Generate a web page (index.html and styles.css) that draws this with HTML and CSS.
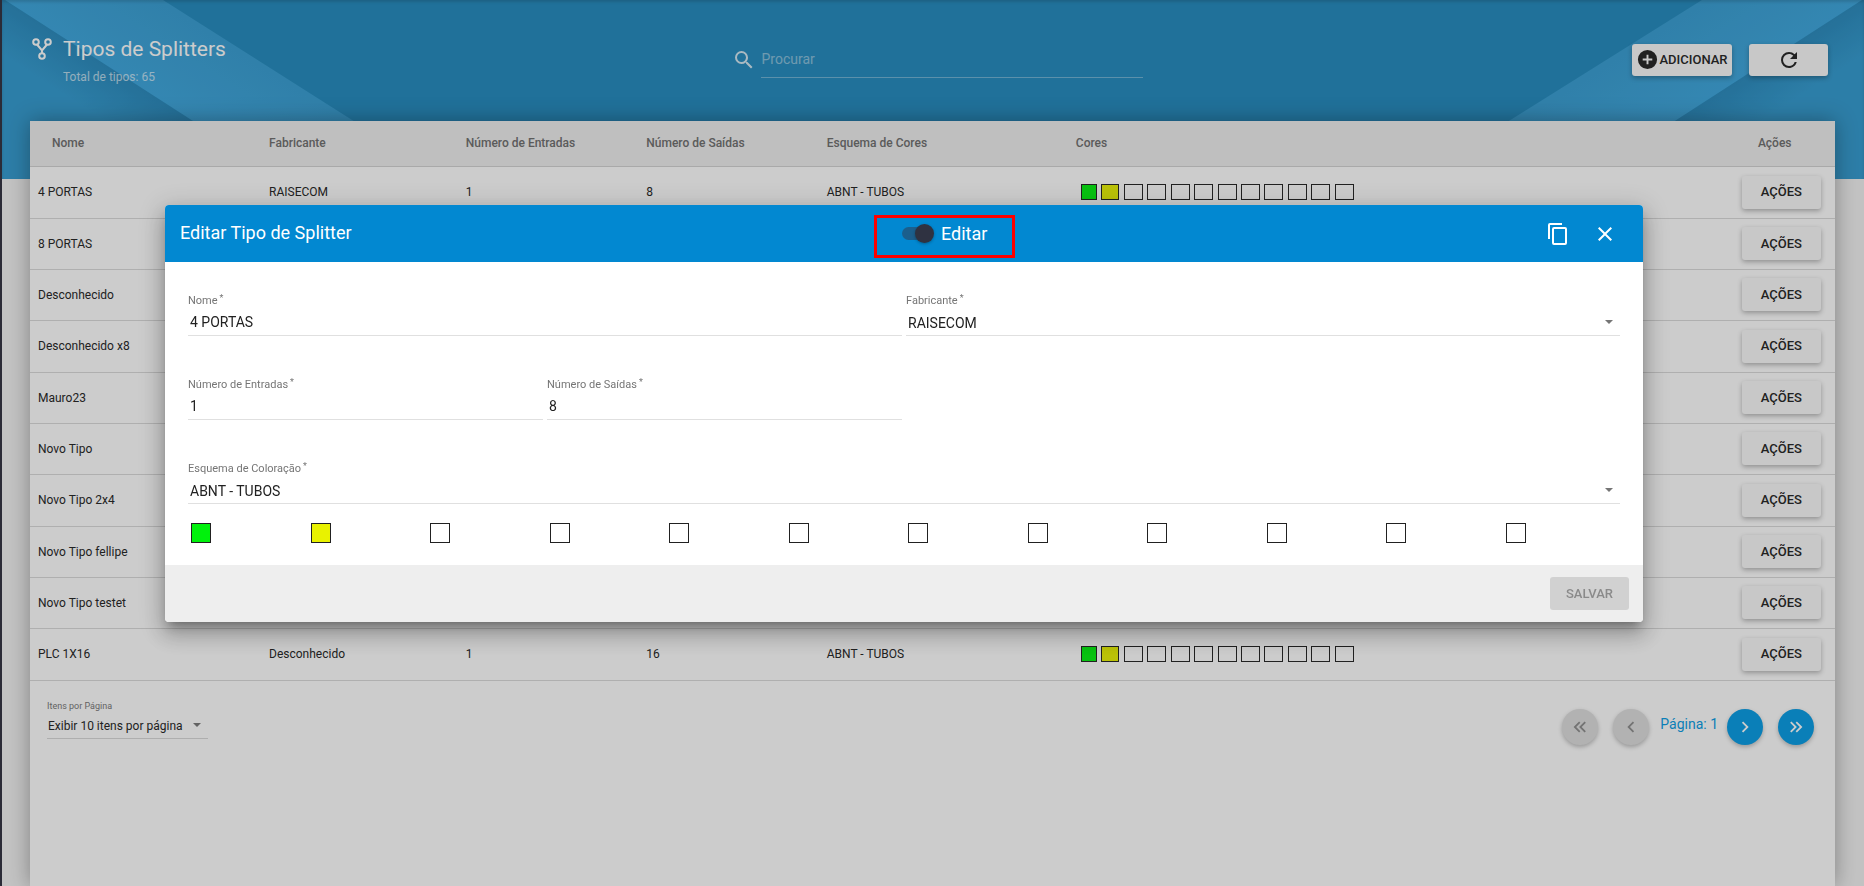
FILE: index.html
```html
<!DOCTYPE html>
<html lang="pt-BR">
<head>
<meta charset="utf-8">
<title>Tipos de Splitters</title>
<link rel="stylesheet" href="styles.css">
</head>
<body>
<div class="page">
  <div class="hero" aria-hidden="true">
    <svg class="hero-art" viewBox="0 0 460 179">
      <defs>
        <linearGradient id="foldLeft" gradientUnits="userSpaceOnUse" x1="98" y1="61" x2="72" y2="101">
          <stop offset="0" stop-color="#2688bc"/><stop offset="1" stop-color="#309ad0"/>
        </linearGradient>
        <linearGradient id="bandLeft" gradientUnits="userSpaceOnUse" x1="98" y1="61" x2="142" y2="-8">
          <stop offset="0" stop-color="#3aa5dd"/><stop offset="1" stop-color="#359dd3"/>
        </linearGradient>
      </defs>
      <path d="M0 0H3L281 179H0Z" fill="url(#foldLeft)"/>
      <path d="M3 0H161L443 179H281Z" fill="url(#bandLeft)"/>
    </svg>
    <svg class="hero-art" viewBox="0 0 460 179">
      <defs>
        <linearGradient id="foldRight" gradientUnits="userSpaceOnUse" x1="362" y1="61" x2="388" y2="101">
          <stop offset="0" stop-color="#2688bc"/><stop offset="1" stop-color="#309ad0"/>
        </linearGradient>
        <linearGradient id="bandRight" gradientUnits="userSpaceOnUse" x1="362" y1="61" x2="318" y2="-8">
          <stop offset="0" stop-color="#3aa5dd"/><stop offset="1" stop-color="#359dd3"/>
        </linearGradient>
      </defs>
      <path d="M460 0H458L181 179H460Z" fill="url(#foldRight)"/>
      <path d="M458 0H298L12 179H181Z" fill="url(#bandRight)"/>
    </svg>
  </div>

  <header class="toolbar">
    <div class="heading">
      <svg class="heading-icon" viewBox="0 0 20 22" fill="none" stroke="currentColor" stroke-width="2">
        <circle cx="4" cy="4" r="2.8"/><circle cx="16" cy="4" r="2.8"/><circle cx="10" cy="18" r="2.8"/>
        <path d="M5 6.5L10 12.5L15 6.5M10 12V15.500"/>
      </svg>
      <div>
        <h1 class="title">Tipos de Splitters</h1>
        <p class="subtitle">Total de tipos: 65</p>
      </div>
    </div>
    <div class="search">
      <svg class="icon search-icon" viewBox="0 0 24 24"><path d="M9.5 3A6.500 6.500 0 0 1 16 9.500c0 1.610-.59 3.090-1.560 4.230l.27.27h.79l5 5-1.500 1.500-5-5v-.79l-.27-.27A6.516 6.516 0 0 1 9.500 16 6.500 6.500 0 0 1 3 9.500 6.500 6.500 0 0 1 9.500 3m0 2C7 5 5 7 5 9.500S7 14 9.500 14 14 12 14 9.500 12 5 9.500 5Z"/></svg>
      <input class="search-input" type="text" placeholder="Procurar" aria-label="Procurar">
    </div>
    <div class="tools">
      <button class="btn btn-add" type="button">
        <svg class="icon" viewBox="0 0 24 24"><path d="M17 13h-4v4h-2v-4H7v-2h4V7h2v4h4m-5-9A10 10 0 0 0 2 12a10 10 0 0 0 10 10 10 10 0 0 0 10-10A10 10 0 0 0 12 2Z"/></svg>ADICIONAR
      </button>
      <button class="btn btn-refresh" type="button" aria-label="Atualizar">
        <svg class="icon" viewBox="0 0 24 24"><path d="M17.650 6.350A7.958 7.958 0 0 0 12 4a8 8 0 0 0-8 8 8 8 0 0 0 8 8c3.730 0 6.840-2.550 7.730-6h-2.080A5.990 5.990 0 0 1 12 18a6 6 0 0 1-6-6 6 6 0 0 1 6-6c1.660 0 3.140.69 4.220 1.780L13 11h7V4l-2.350 2.350Z"/></svg>
      </button>
    </div>
  </header>

  <main class="card">
    <table class="grid">
      <colgroup>
        <col class="c-name"><col class="c-maker"><col class="c-in"><col class="c-out"><col class="c-scheme"><col class="c-colors"><col class="c-actions">
      </colgroup>
      <thead>
        <tr><th class="th-name">Nome</th><th>Fabricante</th><th>Número de Entradas</th><th>Número de Saídas</th><th>Esquema de Cores</th><th>Cores</th><th class="th-actions">Ações</th></tr>
      </thead>
      <tbody>
        <tr><td>4 PORTAS</td><td>RAISECOM</td><td>1</td><td>8</td><td>ABNT - TUBOS</td>
          <td><div class="chips"><i class="chip green"></i><i class="chip yellow"></i><i class="chip"></i><i class="chip"></i><i class="chip"></i><i class="chip"></i><i class="chip"></i><i class="chip"></i><i class="chip"></i><i class="chip"></i><i class="chip"></i><i class="chip"></i></div></td>
          <td><button class="btn btn-row" type="button">AÇÕES</button></td></tr>
        <tr><td>8 PORTAS</td><td></td><td></td><td></td><td></td><td></td><td><button class="btn btn-row" type="button">AÇÕES</button></td></tr>
        <tr><td>Desconhecido</td><td></td><td></td><td></td><td></td><td></td><td><button class="btn btn-row" type="button">AÇÕES</button></td></tr>
        <tr><td>Desconhecido x8</td><td></td><td></td><td></td><td></td><td></td><td><button class="btn btn-row" type="button">AÇÕES</button></td></tr>
        <tr><td>Mauro23</td><td></td><td></td><td></td><td></td><td></td><td><button class="btn btn-row" type="button">AÇÕES</button></td></tr>
        <tr><td>Novo Tipo</td><td></td><td></td><td></td><td></td><td></td><td><button class="btn btn-row" type="button">AÇÕES</button></td></tr>
        <tr><td>Novo Tipo 2x4</td><td></td><td></td><td></td><td></td><td></td><td><button class="btn btn-row" type="button">AÇÕES</button></td></tr>
        <tr><td>Novo Tipo fellipe</td><td></td><td></td><td></td><td></td><td></td><td><button class="btn btn-row" type="button">AÇÕES</button></td></tr>
        <tr><td>Novo Tipo testet</td><td></td><td></td><td></td><td></td><td></td><td><button class="btn btn-row" type="button">AÇÕES</button></td></tr>
        <tr><td>PLC 1X16</td><td>Desconhecido</td><td>1</td><td>16</td><td>ABNT - TUBOS</td>
          <td><div class="chips"><i class="chip green"></i><i class="chip yellow"></i><i class="chip"></i><i class="chip"></i><i class="chip"></i><i class="chip"></i><i class="chip"></i><i class="chip"></i><i class="chip"></i><i class="chip"></i><i class="chip"></i><i class="chip"></i></div></td>
          <td><button class="btn btn-row" type="button">AÇÕES</button></td></tr>
      </tbody>
    </table>

    <div class="pager">
      <div class="page-size">
        <label class="page-size-label" for="pageSize">Itens por Página</label>
        <div class="select-box">
          <select class="page-size-select" id="pageSize"><option>Exibir 10 itens por página</option></select>
        </div>
      </div>
      <nav class="pages" aria-label="Paginação">
        <button class="round" type="button" disabled aria-label="Primeira página"><svg class="icon-small" viewBox="0 0 24 24"><path d="M18.410 7.410 17 6l-6 6 6 6 1.410-1.410L13.830 12l4.580-4.590m-6 0L11 6l-6 6 6 6 1.410-1.410L7.830 12l4.580-4.590Z"/></svg></button>
        <button class="round" type="button" disabled aria-label="Página anterior"><svg class="icon-small" viewBox="0 0 24 24"><path d="M15.410 16.580 10.830 12l4.580-4.590L14 6l-6 6 6 6 1.410-1.420Z"/></svg></button>
        <span class="page-now">Página: 1</span>
        <button class="round" type="button" aria-label="Próxima página"><svg class="icon-small" viewBox="0 0 24 24"><path d="M8.590 16.580 13.170 12 8.590 7.410 10 6l6 6-6 6-1.410-1.420Z"/></svg></button>
        <button class="round" type="button" aria-label="Última página"><svg class="icon-small" viewBox="0 0 24 24"><path d="M5.590 7.410 7 6l6 6-6 6-1.410-1.410L10.170 12 5.590 7.410m6 0L13 6l6 6-6 6-1.410-1.410L16.170 12l-4.580-4.590Z"/></svg></button>
      </nav>
    </div>
  </main>
</div>

<div class="backdrop">
  <form class="dialog" role="dialog" aria-label="Editar Tipo de Splitter">
    <div class="dialog-head">
      <h2 class="dialog-title">Editar Tipo de Splitter</h2>
      <label class="toggle">
        <input class="toggle-input" type="checkbox" checked>
        <span class="toggle-text">Editar</span>
      </label>
      <div class="dialog-tools">
        <button class="icon-btn" type="button" aria-label="Copiar"><svg class="icon" viewBox="0 0 24 24"><path d="M19 21H8V7h11m0-2H8a2 2 0 0 0-2 2v14a2 2 0 0 0 2 2h11a2 2 0 0 0 2-2V7a2 2 0 0 0-2-2m-3-4H4a2 2 0 0 0-2 2v14h2V3h12V1Z"/></svg></button>
        <button class="icon-btn" type="button" aria-label="Fechar"><svg class="icon" viewBox="0 0 24 24"><path d="M19 6.410 17.590 5 12 10.590 6.410 5 5 6.410 10.590 12 5 17.590 6.410 19 12 13.410 17.590 19 19 17.590 13.410 12 19 6.410Z"/></svg></button>
      </div>
    </div>
    <div class="dialog-body">
      <div class="fields">
        <div class="field span-2">
          <label class="label" for="nome">Nome<span class="req">*</span></label>
          <input class="control" id="nome" type="text" value="4 PORTAS">
        </div>
        <div class="field span-2">
          <label class="label" for="fabricante">Fabricante<span class="req">*</span></label>
          <div class="select-box"><select class="control" id="fabricante"><option>RAISECOM</option></select></div>
        </div>
        <div class="field">
          <label class="label" for="entradas">Número de Entradas<span class="req">*</span></label>
          <input class="control" id="entradas" type="text" value="1">
        </div>
        <div class="field">
          <label class="label" for="saidas">Número de Saídas<span class="req">*</span></label>
          <input class="control" id="saidas" type="text" value="8">
        </div>
        <div class="field span-4">
          <label class="label" for="esquema">Esquema de Coloração<span class="req">*</span></label>
          <div class="select-box"><select class="control" id="esquema"><option>ABNT - TUBOS</option></select></div>
        </div>
      </div>
      <div class="palette">
        <i class="swatch green"></i><i class="swatch yellow"></i><i class="swatch"></i><i class="swatch"></i><i class="swatch"></i><i class="swatch"></i><i class="swatch"></i><i class="swatch"></i><i class="swatch"></i><i class="swatch"></i><i class="swatch"></i><i class="swatch"></i>
      </div>
    </div>
    <div class="dialog-foot">
      <button class="btn btn-save" type="submit" disabled>SALVAR</button>
    </div>
  </form>
</div>
</body>
</html>
```

FILE: styles.css
```css
* { box-sizing: border-box; }

body {
  margin: 0;
  font-family: Roboto, "Liberation Sans", sans-serif;
  font-size: 12px;
  color: #212121;
  background: #f3f3f3;
  overflow: hidden;
}

button, input, select { font-family: inherit; color: inherit; margin: 0; }

.page {
  position: relative;
  display: flex;
  flex-direction: column;
  height: 100vh;
  border-left: 2px solid #2e2e3e;
}

/* Blue banner behind the toolbar and the top of the card */
.hero {
  position: absolute;
  inset: 0 0 auto 0;
  height: 179px;
  display: flex;
  justify-content: space-between;
  background: #2089be;
}
.hero::after {
  content: "";
  position: absolute;
  inset: 0;
  box-shadow: inset 0 2px 3px rgba(0, 0, 0, .15);
}
.hero-art { width: 460px; height: 179px; }

.toolbar {
  position: relative;
  display: grid;
  grid-template-columns: 1fr 411px 1fr;
  height: 121px;
  padding: 0 36px 0 30px;
  color: #fff;
}
.heading { display: flex; gap: 11px; padding-top: 35px; }
.heading-icon { width: 20px; height: 22px; margin-top: 3px; }
.title { margin: 0; font-size: 21px; font-weight: 400; line-height: 28px; }
.subtitle { margin: 6px 0 0; line-height: 16px; opacity: .65; }

.icon { width: 24px; height: 24px; fill: currentColor; flex: none; }
.search { display: flex; gap: 5px; padding-top: 43px; margin: 0 -7px 0 7px; }
.search-icon { margin-top: 5px; opacity: .8; }
.search-input {
  flex: 1;
  min-width: 0;
  height: 35px;
  padding: 0 1px 3px;
  font-size: 14px;
  border: 0;
  border-bottom: 1px solid rgba(255, 255, 255, .35);
  background: none;
  outline: 0;
}
.search-input::placeholder { color: #fff; opacity: .45; }

.tools { display: flex; justify-content: flex-end; gap: 17px; padding-top: 44px; }
.btn {
  display: flex;
  align-items: center;
  justify-content: center;
  height: 33px;
  width: 79px;
  padding: 0 0 1px;
  border: 0;
  border-radius: 3px;
  font-size: 13px;
  font-weight: 500;
  color: #212121;
  background: #fafafa;
  box-shadow: 0 2px 5px rgba(0, 0, 0, .3);
}
.tools .btn { height: 32px; }
.tools .btn-add { width: 100px; }
.btn-add .icon { width: 23px; height: 23px; }

.card {
  position: relative;
  flex: 1;
  margin: 0 29px 0 28px;
  background: #fff;
  box-shadow: 0 0 20px rgba(0, 0, 0, .35);
}

.grid { width: 100%; table-layout: fixed; border-collapse: collapse; }
.c-name { width: 12.8%; }
.c-maker { width: 10.9%; }
.c-in, .c-out { width: 10%; }
.c-scheme { width: 13.8%; }
.c-colors { width: 36.9%; }
.c-actions { width: 5.6%; }
.grid th {
  height: 45px;
  padding: 0 8px;
  text-align: left;
  font-weight: 500;
  color: #6c6c6c;
  background: #eee;
  border-bottom: 1px solid #d2d2d2;
}
.grid .th-name { padding-left: 22px; }
.grid .th-actions { padding-left: 24px; }
.grid td { height: 51px; padding: 0 8px; border-bottom: 1px solid #dadada; }
.grid tbody tr:nth-child(3n+1) td { height: 52px; }

.chips { display: flex; justify-content: space-between; width: 279px; padding: 0 1px 0 5px; }
.chip { width: 19px; height: 16px; border: 1px solid #212121; }
.chip.green { width: 16px; }
.chip.yellow { width: 18px; }
.green { background: #00f20c; }
.yellow { background: #e9f200; }

.pager { display: flex; justify-content: space-between; padding: 18px 21px 0 17px; }
.page-size { width: 161px; }
.page-size-label { display: block; font-size: 9px; line-height: 14px; color: #757575; }
.select-box { position: relative; }
.select-box::after {
  content: "";
  position: absolute;
  top: 12px;
  right: 7px;
  border: 4px solid transparent;
  border-top-color: #757575;
  border-bottom: 0;
  pointer-events: none;
}
.page-size .select-box::after { top: 10px; }
select {
  display: block;
  width: 100%;
  appearance: none;
  border-radius: 0;
  outline: 0;
}
.page-size-select {
  height: 26px;
  padding: 2px 1px 0;
  font-size: 12px;
  border: 0;
  border-bottom: 1px solid #d8d8d8;
  background: none;
}
.pages { display: flex; align-items: flex-start; gap: 15px; padding-top: 10px; }
.round {
  display: flex;
  align-items: center;
  justify-content: center;
  width: 36px;
  height: 36px;
  padding: 0;
  border: 0;
  border-radius: 50%;
  color: #fff;
  background: #039be5;
  box-shadow: 0 2px 4px rgba(0, 0, 0, .26);
}
.round:disabled { color: #8c8c8c; background: #dedede; }
.icon-small { width: 22px; height: 22px; fill: currentColor; }
.page-now { margin: 0 -6px 0 -4px; font-size: 14px; line-height: 30px; color: #039be5; }

/* Dialog over the dimmed page */
.backdrop {
  position: fixed;
  inset: 0;
  padding: 205px 221px 0 165px;
  background: rgba(33, 33, 33, .23);
}
.dialog {
  border-radius: 4px;
  background: #fff;
  box-shadow: 0 7px 9px -4px rgba(0, 0, 0, .3), 0 13px 19px 2px rgba(0, 0, 0, .16), 0 5px 24px 4px rgba(0, 0, 0, .16);
}
.dialog-head {
  display: grid;
  grid-template-columns: 709px 141px 1fr;
  align-items: center;
  height: 57px;
  padding-right: 26px;
  color: #fff;
  background: #0288d1;
  border-radius: 4px 4px 0 0;
}
.dialog-title { margin: 0; padding: 0 0 2px 15px; font-size: 18px; font-weight: 400; }
.toggle {
  display: flex;
  align-items: center;
  gap: 7px;
  height: 43px;
  padding: 0 0 7px 25px;
  border: 3px solid #f00;
  margin-top: 6px;
}
.toggle-input {
  appearance: none;
  position: relative;
  width: 32px;
  height: 13px;
  border-radius: 7px;
  background: linear-gradient(#1b5f8d, #1b5f8d) no-repeat 0 0 / 24px 13px;
}
.toggle-input::after {
  content: "";
  position: absolute;
  top: -3px;
  right: 0;
  width: 19px;
  height: 19px;
  border-radius: 50%;
  background: #2f3241;
  box-shadow: 0 1px 3px rgba(0, 0, 0, .3);
}
.toggle-text { font-size: 18px; font-weight: 400; }
.dialog-tools { display: flex; justify-content: flex-end; gap: 23px; }
.icon-btn { display: flex; padding: 0; border: 0; color: #fff; background: none; }

.dialog-body { padding: 30px 23px 22px; }
.fields { display: grid; grid-template-columns: repeat(4, 1fr); gap: 40px 4px; }
.span-2 { grid-column: span 2; }
.span-4 { grid-column: 1 / -1; }
.label { display: block; height: 16px; font-size: 11px; line-height: 18px; color: #757575; }
.req { margin-left: 2px; font-size: 9px; vertical-align: 3px; line-height: 1; }
.control {
  display: block;
  width: 100%;
  height: 28px;
  padding: 0 2px;
  font-size: 14px;
  border: 0;
  border-bottom: 1px solid #e0e0e0;
  background: none;
  outline: 0;
}
select.control { padding-top: 2px; }
.palette { display: flex; justify-content: space-between; padding: 0 94px 0 3px; margin-top: 19px; }
.swatch { width: 20px; height: 20px; border: 1px solid #212121; }

.dialog-foot {
  display: flex;
  justify-content: flex-end;
  padding: 12px 14px;
  background: #eee;
  border-radius: 0 0 4px 4px;
}
.btn-save:disabled { color: #8a8a8a; background: #d1d1d1; box-shadow: none; }
```
